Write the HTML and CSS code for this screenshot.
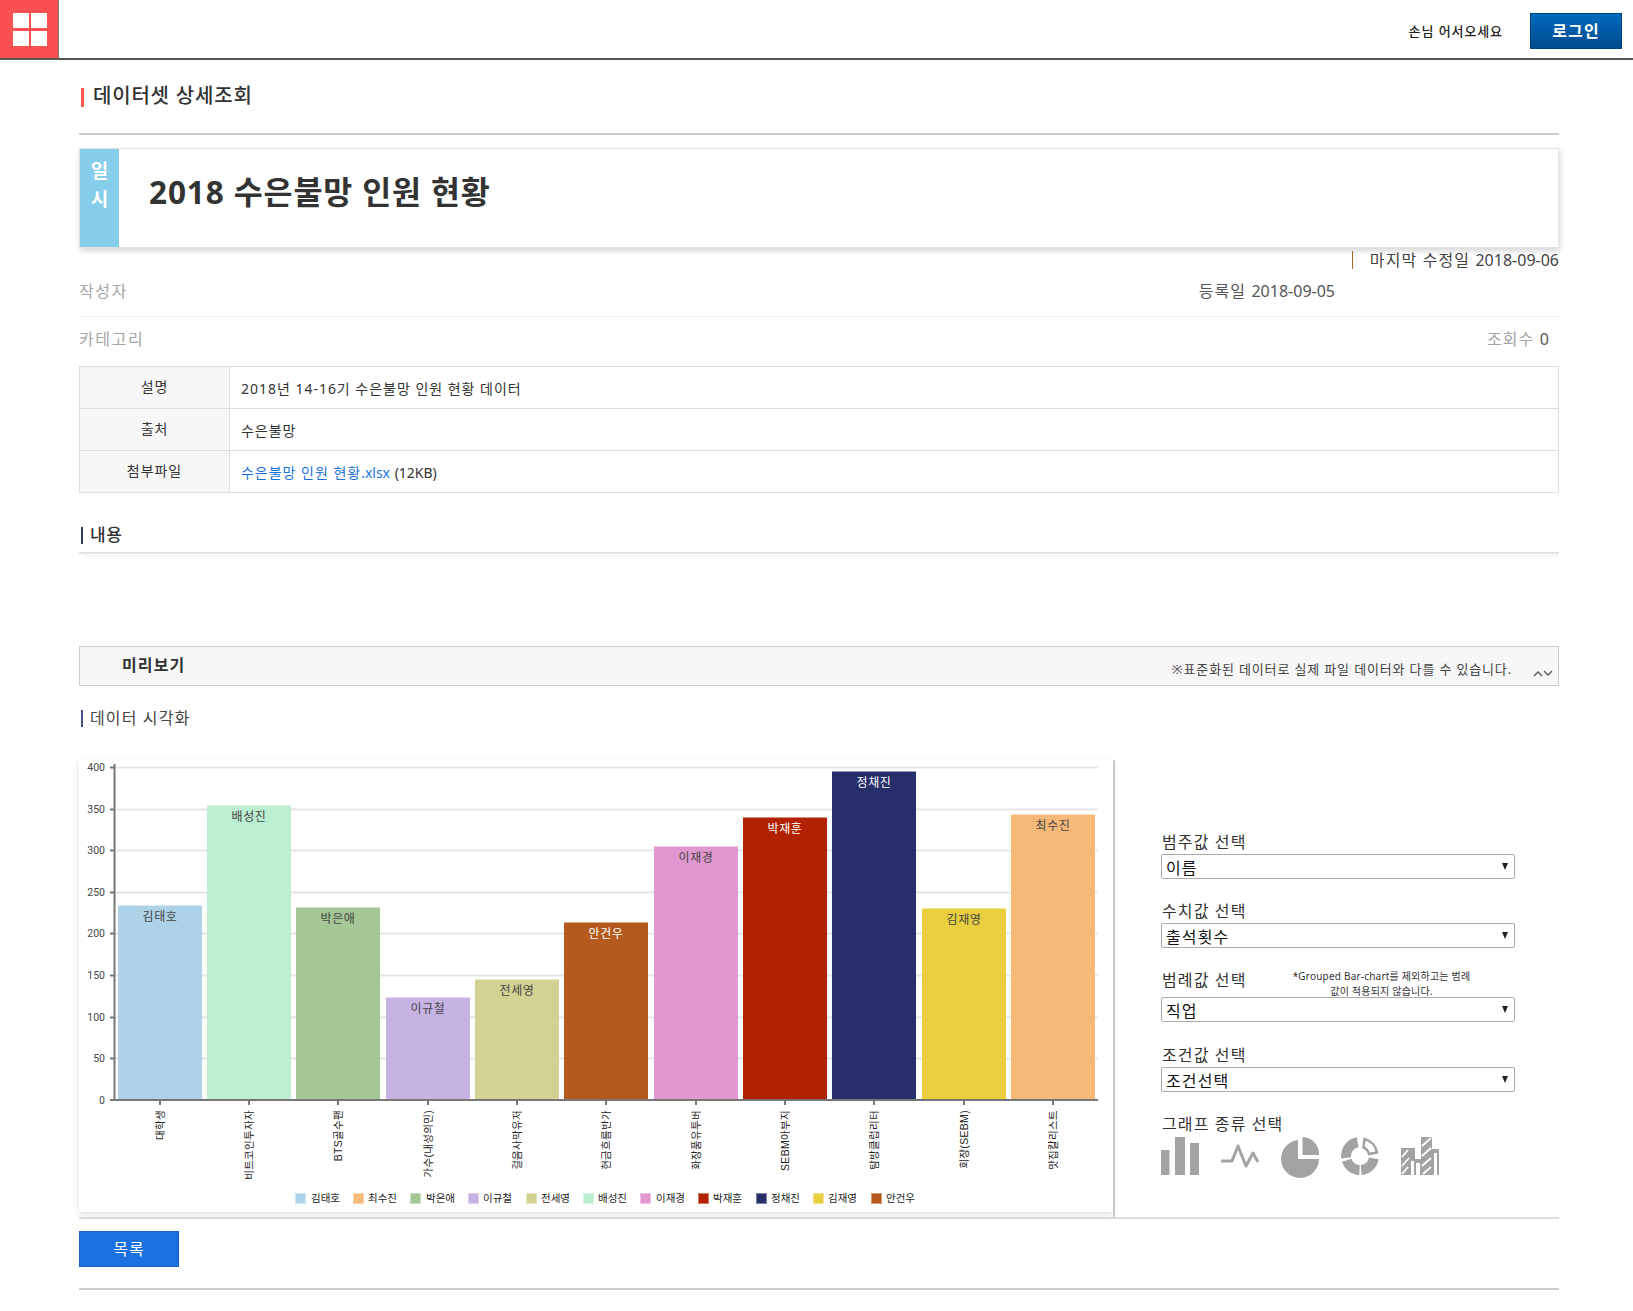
FILE: index.html
```html
<!DOCTYPE html>
<html lang="ko">
<head>
<meta charset="utf-8">
<title>데이터셋 상세조회</title>
<link rel="stylesheet" href="styles.css">
</head>
<body>
<header class="topbar">
  <a class="logo" href="#" aria-label="메뉴"><span></span><span></span><span></span><span></span></a>
  <div class="user-area">
    <span class="greeting">손님 어서오세요</span>
    <button class="login" type="button">로그인</button>
  </div>
</header>
<main class="page">
  <h1 class="page-title">데이터셋 상세조회</h1>
  <section class="doc-card">
    <div class="doc-tag">일<br>시</div>
    <h2 class="doc-title">2018 수은불망 인원 현황</h2>
  </section>
  <div class="meta-updated"><span class="meta-bar"></span>마지막 수정일 <span class="num">2018-09-06</span></div>
  <div class="meta-row meta-author">
    <span class="meta-label">작성자</span>
    <span class="meta-date">등록일 <span class="num">2018-09-05</span></span>
  </div>
  <div class="meta-row meta-cat">
    <span class="meta-label">카테고리</span>
    <span class="meta-views"><span class="meta-count">조회수</span> 0</span>
  </div>
  <table class="info">
    <tr><th>설명</th><td>2018년 14-16기 수은불망 인원 현황 데이터</td></tr>
    <tr><th>출처</th><td>수은불망</td></tr>
    <tr><th>첨부파일</th><td><a href="#">수은불망 인원 현황<span class="num">.xlsx</span></a> <span class="num">(12KB)</span></td></tr>
  </table>
  <h3 class="content-head">내용</h3>
  <div class="content-rule"></div>
  <section class="preview-bar">
    <strong class="preview-title">미리보기</strong>
    <span class="preview-note">※표준화된 데이터로 실제 파일 데이터와 다를 수 있습니다.</span>
    <svg class="chev" width="20" height="8" viewBox="0 0 20 8" aria-hidden="true"><path d="M1 7l4-4 4 4M11 2l4 4 4-4" fill="none" stroke="#555" stroke-width="1.3"/></svg>
  </section>
  <h4 class="viz-head">데이터 시각화</h4>
  <div class="viz">
    <div class="chart-wrap">
      <div class="chart-card">
        <svg class="chart" width="1035" height="451" viewBox="79 760 1035 451">
          <g class="grid">
            <path d="M114 767.5H1098M114 809.5H1098M114 850.5H1098M114 892.5H1098M114 933.5H1098M114 975.5H1098M114 1017.5H1098M114 1058.5H1098"/>
          </g>
          <g class="ylabels">
            <text x="105" y="771">400</text><text x="105" y="813">350</text><text x="105" y="854">300</text><text x="105" y="896">250</text><text x="105" y="937">200</text><text x="105" y="979">150</text><text x="105" y="1021">100</text><text x="105" y="1062">50</text><text x="105" y="1104">0</text>
          </g>
          <path class="ticks" d="M110 767.5H115M110 809.5H115M110 850.5H115M110 892.5H115M110 933.5H115M110 975.5H115M110 1017.5H115M110 1058.5H115M110 1100H115"/>
          <g>
            <rect x="118" y="905.5" width="84" height="194.5" fill="#aed3e8"/>
            <rect x="207" y="805.5" width="84" height="294.5" fill="#bcefd0"/>
            <rect x="296" y="907.5" width="84" height="192.5" fill="#a5c695"/>
            <rect x="386" y="997.5" width="84" height="102.5" fill="#c6b3e3"/>
            <rect x="475" y="979.5" width="84" height="120.5" fill="#d2d292"/>
            <rect x="564" y="922.5" width="84" height="177.5" fill="#b55a1c"/>
            <rect x="654" y="846.5" width="84" height="253.5" fill="#e198d0"/>
            <rect x="743" y="817.5" width="84" height="282.5" fill="#b22200"/>
            <rect x="832" y="771.5" width="84" height="328.5" fill="#282e6b"/>
            <rect x="922" y="908.5" width="84" height="191.5" fill="#e9cf3d"/>
            <rect x="1011" y="814.5" width="84" height="285.5" fill="#f6b977"/>
          </g>
          <g class="barlabels">
            <text x="160" y="921">김태호</text><text x="249" y="821">배성진</text><text x="338" y="923">박은애</text><text x="428" y="1013">이규철</text><text x="517" y="995">전세영</text>
            <text class="light" x="606" y="938">안건우</text><text x="696" y="862">이재경</text><text class="light" x="785" y="833">박재훈</text><text class="light" x="874" y="787">정채진</text><text x="964" y="924">김재영</text><text x="1053" y="830">최수진</text>
          </g>
          <path class="axis" d="M114.5 764V1100H1098"/>
          <path class="ticks" d="M160 1100v5M249 1100v5M338 1100v5M428 1100v5M517 1100v5M606 1100v5M696 1100v5M785 1100v5M874 1100v5M964 1100v5M1053 1100v5"/>
          <g class="xlabels">
            <text transform="translate(164 1110) rotate(-90)">대학생</text>
            <text transform="translate(253 1110) rotate(-90)">비트코인투자자</text>
            <text transform="translate(342 1110) rotate(-90)">BTS골수팬</text>
            <text transform="translate(432 1110) rotate(-90)">가수(내성의민)</text>
            <text transform="translate(521 1110) rotate(-90)">걸음사막유저</text>
            <text transform="translate(610 1110) rotate(-90)">현금흐름반가</text>
            <text transform="translate(700 1110) rotate(-90)">화장품유투버</text>
            <text transform="translate(789 1110) rotate(-90)">SEBM아부지</text>
            <text transform="translate(878 1110) rotate(-90)">탐방클럽리터</text>
            <text transform="translate(968 1110) rotate(-90)">회장(SEBM)</text>
            <text transform="translate(1057 1110) rotate(-90)">맛집칼리스트</text>
          </g>
          <g class="legend">
            <rect x="295.500" y="1193.500" width="10" height="10" fill="#aed3e8" stroke="#cfe5f1"/><text x="311" y="1202">김태호</text>
            <rect x="353.500" y="1193.500" width="10" height="10" fill="#f6b977" stroke="#fad5ad"/><text x="368" y="1202">최수진</text>
            <rect x="410.500" y="1193.500" width="10" height="10" fill="#a5c695" stroke="#c9ddc0"/><text x="426" y="1202">박은애</text>
            <rect x="468.500" y="1193.500" width="10" height="10" fill="#c6b3e3" stroke="#ddd1ee"/><text x="483" y="1202">이규철</text>
            <rect x="526.500" y="1193.500" width="10" height="10" fill="#d2d292" stroke="#e4e4bd"/><text x="541" y="1202">전세영</text>
            <rect x="583.500" y="1193.500" width="10" height="10" fill="#bcefd0" stroke="#d7f5e3"/><text x="598" y="1202">배성진</text>
            <rect x="640.500" y="1193.500" width="10" height="10" fill="#e198d0" stroke="#edc1e2"/><text x="656" y="1202">이재경</text>
            <rect x="698.500" y="1193.500" width="10" height="10" fill="#b22200" stroke="#d17a66"/><text x="713" y="1202">박재훈</text>
            <rect x="756.500" y="1193.500" width="10" height="10" fill="#282e6b" stroke="#7e82a6"/><text x="771" y="1202">정채진</text>
            <rect x="813.500" y="1193.500" width="10" height="10" fill="#e9cf3d" stroke="#f2e28b"/><text x="828" y="1202">김재영</text>
            <rect x="871.500" y="1193.500" width="10" height="10" fill="#b55a1c" stroke="#d29c77"/><text x="886" y="1202">안건우</text>
          </g>
        </svg>
      </div>
    </div>
    <form class="controls">
      <label class="ctl-label ctl-first" for="s1">범주값 선택</label>
      <div class="select-box"><select id="s1"><option>이름</option></select></div>
      <label class="ctl-label" for="s2">수치값 선택</label>
      <div class="select-box"><select id="s2"><option>출석횟수</option></select></div>
      <div class="ctl-row">
        <label class="ctl-label" for="s3">범례값 선택</label>
        <p class="ctl-note">*Grouped Bar-chart를 제외하고는 범례<br>값이 적용되지 않습니다.</p>
      </div>
      <div class="select-box"><select id="s3"><option>직업</option></select></div>
      <label class="ctl-label ctl-cond" for="s4">조건값 선택</label>
      <div class="select-box"><select id="s4"><option>조건선택</option></select></div>
      <div class="ctl-label ctl-graph">그래프 종류 선택</div>
      <div class="graph-icons">
        <svg width="38" height="42" viewBox="0 0 38 42" aria-label="막대"><path d="M0 13h8.500v25H0zM14 0h10v38H14zM29 6h9v32h-9z"/></svg>
        <svg width="38" height="42" viewBox="0 0 38 42" aria-label="선"><path class="ico-line" d="M0 24h11l6-15 8 20 7-13 5 9"/></svg>
        <svg width="38" height="42" viewBox="0 0 38 42" aria-label="파이"><path d="M17 3.100V22h21A19 19 0 1 1 17 3.100zM21.500 0A17 17 0 0 1 38 18H21.500z"/></svg>
        <svg width="38" height="42" viewBox="0 0 38 42" aria-label="도넛"><path class="ico-ring" d="M5.100 20.900A14 14 0 0 1 16.600 5.200M18.500 33A14 14 0 0 1 5.700 23.300M32.800 21.400A14 14 0 0 1 20.200 32.900"/><path class="ico-outline" d="M23.500 2A17 17 0 0 1 36 15.500L28 17A9.500 9.500 0 0 0 22.500 10.500z"/></svg>
        <svg width="38" height="42" viewBox="0 0 38 42" aria-label="누적"><path d="M0 11H14V22H20V0H31V12H38V38H0Z"/><path class="ico-hatch" d="M1 20l6-7M1 29l7-8M1 37l6-7M21 9l9-8M21 19l9-8M21 29l9-8M22 37l8-7"/><path class="ico-hole" d="M10 24h3v14h-3zM15 26h4v12h-4zM33 16h3v22h-3z"/></svg>
      </div>
    </form>
  </div>
  <div class="actions"><button class="list-btn" type="button">목록</button></div>
</main>
</body>
</html>
```
FILE: styles.css
```css
* { box-sizing: border-box; letter-spacing: .07em; }
html, body { margin: 0; padding: 0; background: #fff; }
body {
  font-family: "Noto Sans", "Noto Sans CJK KR", sans-serif;
  color: #333;
  font-size: 14px;
}
h1, h2, h3, h4, p { margin: 0; }
.num { letter-spacing: 0; }

.topbar {
  height: 60px;
  border-bottom: 2px solid #555;
  display: flex;
  align-items: flex-start;
  justify-content: space-between;
}
.logo {
  width: 59px;
  height: 60px;
  background: #f95151;
  border-right: 1px solid #777;
  border-bottom: 2px solid #555;
  padding: 13px 11px 12px 13px;
  display: grid;
  grid-template-columns: 16px 16px;
  grid-template-rows: 15px 15px;
  gap: 3px 2px;
}
.logo span { background: #fff; }
.user-area {
  display: flex;
  align-items: center;
  padding: 13px 11px 0 0;
  gap: 27px;
}
.greeting { font-size: 13px; color: #222; font-weight: 500; line-height: 36px; }
.login {
  width: 92px;
  height: 36px;
  border: 1px solid #00437f;
  background: linear-gradient(#0069be, #004c8b);
  color: #fff;
  font: 700 16px "Noto Sans CJK KR", sans-serif;
  padding: 0 0 3px;
}

.page { padding: 0 74px 0 79px; }
.page-title {
  height: 75px;
  border-bottom: 2px solid #ccc;
  padding: 22px 0 0 14px;
  font-size: 20px;
  line-height: 28px;
  font-weight: 500;
  letter-spacing: .04em;
  color: #333;
  position: relative;
}
.page-title::before {
  content: "";
  position: absolute;
  left: 2px;
  top: 28px;
  width: 3px;
  height: 19px;
  background: #f95b4f;
}
.doc-card {
  margin-top: 13px;
  height: 100px;
  border: 1px solid #e2e2e2;
  box-shadow: 1px 3px 6px rgba(0, 0, 0, .16);
  display: flex;
  background: #fff;
}
.doc-tag {
  width: 39px;
  background: #87ceeb;
  color: #fff;
  font-size: 19px;
  font-weight: 700;
  line-height: 28px;
  text-align: center;
  padding-top: 8px;
  letter-spacing: 0;
}
.doc-title {
  padding: 20px 0 0 30px;
  font-size: 31.5px;
  line-height: 46px;
  font-weight: 700;
  letter-spacing: .028em;
  color: #333;
}
.meta-updated {
  height: 24px;
  font-size: 16px;
  line-height: 24px;
  text-align: right;
  color: #444;
}
.meta-bar {
  display: inline-block;
  width: 1px;
  height: 18px;
  background: #a8682c;
  margin-right: 17px;
  vertical-align: -3px;
}
.meta-row {
  display: flex;
  justify-content: space-between;
  font-size: 16px;
  line-height: 24px;
  color: #555;
}
.meta-author {
  height: 45px;
  padding-top: 7px;
  border-bottom: 1px solid #eee;
}
.meta-cat { height: 49px; padding: 10px 9px 0 0; }
.meta-label { color: #a5a5a5; letter-spacing: .1em; }
.meta-count { color: #a5a5a5; }
.meta-date { margin-right: 224px; }

.info { width: 100%; height: 127px; border-collapse: collapse; font-size: 14px; }
.info th, .info td { border: 1px solid #ddd; height: 42px; }
.info th {
  width: 150px;
  background: #f7f7f7;
  font-weight: 400;
  text-align: center;
  padding-bottom: 4px;
}
.info td { padding: 0 0 0 11px; }
.info a { color: #1a73d9; text-decoration: none; }

.content-head {
  height: 61px;
  margin: 0;
  padding: 29px 0 0 11px;
  font-size: 17px;
  line-height: 26px;
  font-weight: 500;
  letter-spacing: .03em;
  position: relative;
  border-bottom: 2px solid #e0e4e8;
}
.content-head::before {
  content: "";
  position: absolute;
  left: 2px;
  top: 34px;
  width: 2px;
  height: 17px;
  background: #2d3b60;
}
.content-rule { margin: 1px 0 0 5px; height: 1px; background: #efefef; }
.preview-bar {
  margin-top: 90px;
  height: 40px;
  border: 1px solid #ccc;
  background: #f7f7f7;
  display: flex;
  align-items: flex-start;
  padding-left: 42px;
  position: relative;
}
.preview-title { font-size: 16px; line-height: 24px; padding-top: 6px; font-weight: 700; }
.preview-note {
  margin-left: auto;
  margin-right: 46px;
  font-size: 13px;
  line-height: 20px;
  padding-top: 12px;
  color: #444;
  letter-spacing: .065em;
}
.chev { position: absolute; right: 5px; top: 22px; }
.viz-head {
  height: 74px;
  padding: 20px 0 0 11px;
  font-size: 16px;
  line-height: 24px;
  font-weight: 400;
  color: #444;
  position: relative;
}
.viz-head::before {
  content: "";
  position: absolute;
  left: 2px;
  top: 24px;
  width: 2px;
  height: 17px;
  background: #4a4f8a;
}

.viz {
  display: flex;
  height: 459px;
  border-bottom: 2px solid #ddd;
}
.chart-wrap {
  width: 1036px;
  height: 457px;
  border-right: 2px solid #d0d0d0;
}
.chart-card {
  width: 1034px;
  height: 452px;
  box-shadow: 0 3px 7px rgba(0, 0, 0, .12);
  background: #fff;
}
.chart { display: block; overflow: hidden; }
.grid path { stroke: #e6e6e6; stroke-width: 2; fill: none; }
.ylabels text { font: 10.500px Roboto, sans-serif; fill: #444; text-anchor: end; letter-spacing: 0; }
.ticks { stroke: #777; stroke-width: 2; fill: none; }
.axis { stroke: #777; stroke-width: 2; fill: none; }
.barlabels text { font: 12px "Noto Sans CJK KR", sans-serif; fill: #444; text-anchor: middle; letter-spacing: .05em; }
.barlabels .light { fill: #fff; }
.xlabels text { font: 10.500px "Liberation Sans", "Noto Sans CJK KR", sans-serif; fill: #222; text-anchor: end; letter-spacing: .03em; }
.legend text { font: 10.500px "Noto Sans CJK KR", sans-serif; fill: #222; letter-spacing: 0; }

.controls { width: 354px; margin-left: 46px; padding-top: 71px; }
.ctl-label { display: block; font-size: 16px; line-height: 23px; color: #333; padding-left: 1px; }
.ctl-row { display: flex; height: 28px; margin-top: 21px; }
.ctl-note {
  width: 190px;
  margin: 0 0 0 40px;
  font-size: 10px;
  line-height: 15px;
  text-align: center;
  color: #333;
  white-space: nowrap;
  letter-spacing: .02em;
}
.select-box { height: 25px; position: relative; }
.select-box::after {
  content: "";
  position: absolute;
  right: 7px;
  top: 9px;
  border-left: 3.500px solid transparent;
  border-right: 3.500px solid transparent;
  border-top: 7px solid #222;
  pointer-events: none;
}
.select-box + .ctl-label { margin-top: 21px; }
.select-box + .ctl-cond { margin-top: 22px; }
.select-box select {
  width: 100%;
  height: 25px;
  appearance: none;
  border: 1px solid #aaa;
  border-radius: 2px;
  background: #fff;
  color: #111;
  font: 16px "Noto Sans CJK KR", sans-serif;
  padding: 0 0 2px 4px;
}
.select-box + .ctl-graph { margin-top: 21px; }
.graph-icons { display: flex; gap: 22px; padding: 1px 0 0 0; }
.graph-icons svg { display: block; fill: #a3a3a3; }
.ico-line { fill: none; stroke: #a3a3a3; stroke-width: 3; stroke-linejoin: round; }
.ico-ring { fill: none; stroke: #a3a3a3; stroke-width: 10; }
.ico-outline { fill: none; stroke: #a3a3a3; stroke-width: 2.500; }
.ico-hatch { fill: none; stroke: #fff; stroke-width: 1.800; }
.ico-hole { fill: #fff; }

.actions { height: 71px; border-bottom: 2px solid #ccc; padding-top: 12px; }
.list-btn {
  width: 100px;
  height: 36px;
  border: 1px solid #1668cf;
  background: #1a70df;
  color: #fff;
  font: 16px "Noto Sans CJK KR", sans-serif;
  padding: 0 0 2px;
}
```
